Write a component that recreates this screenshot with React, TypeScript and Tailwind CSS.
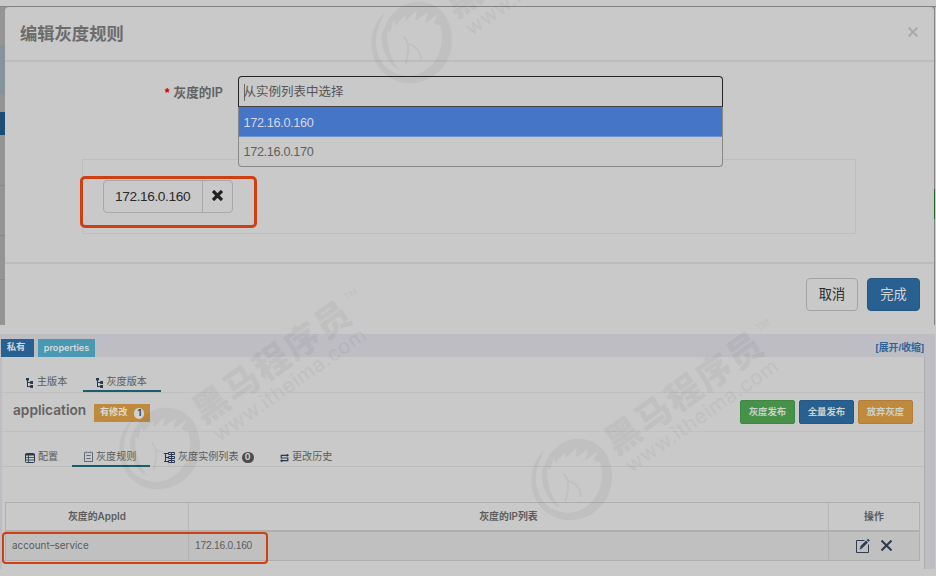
import type { ReactNode } from "react";

function Watermark({ x, y }: { x: number; y: number }) {
  return (
    <g transform={`translate(${x} ${y})`}>
      <g transform="scale(0.3333) translate(-297 -124)">
        <path d="M225 65C255 10 300 0 330 4C390 10 420 60 420 118C420 190 365 248 290 248C230 246 180 200 178 130C178 90 195 55 218 38C195 80 190 110 192 135C200 190 230 220 285 226C350 225 390 170 390 110Q390 90 385 75L365 68L378 40L340 68L348 35L310 60L314 30L280 62L280 42L250 75L245 58L234 97L226 88C222 130 240 190 265 208C235 200 205 150 210 100Z" fill="#000" />
        <path d="M275 108C292 125 292 150 280 192M290 130C310 135 325 150 327 178" fill="none" stroke="#000" strokeWidth="5" />
      </g>
      <g transform="rotate(-35)" fill="#000">
        <text x="50" y="7" fontSize="35" fontWeight="900" letterSpacing="2">黑马程序员</text>
        <text x="238" y="-13" fontSize="10">TM</text>
        <text x="53" y="30" fontSize="20.5" textLength="181" fontFamily="Inter">www.itheima.com</text>
      </g>
    </g>
  );
}

function TreeIcon() {
  return (
    <svg width="8" height="10" viewBox="0 0 8 10" className="relative top-px shrink-0" fill="#2b3a52">
      <path d="M0 0h3v2.5H2V4h2.2V3H7v3H4.2V5H2v3h2.2V7H7v3H4.2V9H1V2.5H0z" />
    </svg>
  );
}

function TableIcon() {
  return (
    <svg width="10" height="10" viewBox="0 0 10 10" className="relative top-px shrink-0" fill="none" stroke="#2b3a52">
      <rect x=".5" y=".5" width="9" height="9" rx="1" />
      <path d="M0 1.7h10" strokeWidth="1.6" />
      <path d="M3.5 2v7M1 4.5h8M1 7h8" strokeWidth=".8" />
    </svg>
  );
}

function NoteIcon() {
  return (
    <svg width="9" height="11" viewBox="0 0 9 11" className="relative shrink-0" fill="none" stroke="#46526a" strokeWidth=".8">
      <path d="M1.3 1.5H.5v9h8v-9h-.8M2.2 .3v2M6.8 .3v2M3.2 1.5h2.6M2.3 4.5h4.4M2.3 7.5h4.4" />
    </svg>
  );
}

function InstancesIcon() {
  return (
    <svg width="11" height="11" viewBox="0 0 11 11" className="relative top-px shrink-0" fill="none" stroke="#2b3a52">
      <path d="M0 1.5h4M1.5 1v9M1 5.5h3M0 9.5h4M4.5 .5h6v2h-6zM4.5 4.5h6v2h-6zM4.5 8.5h6v2h-6zM7.5 0v11" />
    </svg>
  );
}

function HistoryIcon() {
  return (
    <svg width="9" height="8" viewBox="0 0 9 8" className="relative top-px shrink-0" fill="none" stroke="#2b3a52" strokeWidth="1.2">
      <path d="M8.3 1.3H1.2V4h6.6v2.7H.7M6.8 .2l1.3 1.1-1.3 1.1M2.2 5.6L.9 6.7l1.3 1.1" />
    </svg>
  );
}

function Tab({ icon, label, className, children }: { icon: ReactNode; label: string; className: string; children?: ReactNode }) {
  return (
    <div className={`flex h-[35px] shrink-0 items-center text-[10.1px] leading-[15px] whitespace-nowrap text-[#5c5c5c] ${className}`}>
      {icon}
      <span className="ml-[3px]">{label}</span>
      {children}
    </div>
  );
}

function Modal() {
  return (
    <div className="flex h-[319px] border-t border-[#828282] bg-[#949494]">
      <div className="flex w-[5px] shrink-0 flex-col">
        <div className="h-[38px] bg-[#959595]" />
        <div className="h-[49px] bg-[#84949a]" />
        <div className="h-[18px]" />
        <div className="h-[23px] bg-[#1d4c75]" />
        <div className="h-[51px] border-b border-[#888]" />
        <div className="h-[50px] border-b border-[#888]" />
        <div className="h-[44px] border-b border-[#888]" />
      </div>
      <div className="w-[929px] shrink-0 rounded-t-[4px] bg-[#c9c9c9]">
        <div className="flex h-[55px] items-center justify-between border-b-2 border-[#bdbdbd] pr-[16px] pl-[15px]">
          <h4 className="pt-[2px] text-[17.3px] font-bold text-[#6c6c6c]">编辑灰度规则</h4>
          <svg width="10" height="10" viewBox="0 0 10 10" className="mb-[3px]" stroke="#ababab" strokeWidth="2.2"><path d="M.5 .5l9 9M9.5 .5l-9 9" /></svg>
        </div>
        <div className="h-[202px] border-b-2 border-[#bdbdbd] pt-[14px]">
          <div className="flex">
            <label className="w-[218px] pt-[7px] text-right text-[12.6px] leading-[20px] font-bold text-[#626262]">
              <span className="mr-[4px] font-bold text-[#d40000]">*</span>灰度的<span className="font-['Inter'] font-semibold">IP</span>
            </label>
            <div className="relative ml-[14.5px] h-[31px] w-[485px] rounded-t-[4px] border border-[#252525] border-b-[#444]">
              <div className="flex h-[30px] items-center pl-[5px] text-[12.5px] text-[#555]">
                <span className="-mr-px h-[17px] w-px bg-[#666]" />从实例列表中选择
              </div>
              <div className="absolute top-[30px] -left-px z-10 h-[60px] w-[485px] overflow-hidden rounded-b-[4px] border border-t-0 border-[#888] bg-[#c9c9c9] text-[12.7px] leading-[32px] tracking-[-0.35px]">
                <div className="h-[30px] border-b border-[#6f92d2] bg-[#4575c7] pl-[5px] text-[#d5d9e2]">172.16.0.160</div>
                <div className="pl-[5px] leading-[30px] text-[#606060]">172.16.0.170</div>
              </div>
            </div>
          </div>
          <div className="relative mt-[52px] ml-[77px] h-[75px] w-[774px] border border-[#bebebe] pt-[20px] pl-[20px]">
            <div className="flex h-[33px] w-[130px] rounded-[4px] border border-[#a8a8a8] text-[13.7px] tracking-[-0.4px] text-[#292929]">
              <span className="flex w-[99px] items-center border-r border-[#a8a8a8] pt-px pl-[11px]">172.16.0.160</span>
              <span className="flex flex-1 items-center justify-center">
                <svg width="11" height="11" viewBox="0 0 11 11" className="mb-[2px]" stroke="#222" strokeWidth="3.3"><path d="M1 1l9 9M10 1l-9 9" /></svg>
              </span>
            </div>
            <div className="absolute top-[16px] -left-[3px] h-[52px] w-[177px] rounded-[5px] border-3 border-[#cf3f12]" />
          </div>
        </div>
        <div className="flex justify-end gap-[9px] pt-[14px] pr-[14px] text-[13.2px]">
          <button className="h-[33px] w-[52px] rounded-[4px] border border-[#a3a3a3] text-[#292929]">取消</button>
          <button className="h-[33px] w-[53px] rounded-[4px] border border-[#245782] bg-[#286092] text-[#d5d5d5]">完成</button>
        </div>
      </div>
      <div className="h-full w-px bg-[#858585] pt-[182px]"><div className="h-[30px] bg-[#246329]" /></div>
      <div className="w-px bg-[#c9c9c9]" />
    </div>
  );
}

function Namespace() {
  return (
    <div className="mt-[9px] mr-px h-[235px] bg-[#bebdc4]">
      <div className="flex h-[23px] items-center pr-[11px] pl-[1px] pt-[4px] text-[9.3px] font-bold">
        <span className="flex h-[18px] w-[33px] items-center justify-center bg-[#286092] pr-[3px] text-[#d2d6da]">私有</span>
        <span className="ml-[4px] flex h-[18px] w-[57px] items-center justify-center bg-[#4899b1] font-['Inter'] text-[9.1px] font-semibold text-[#d5dbdd]">properties</span>
        <span className="ml-auto pt-px text-[9.8px] text-[#2c649a]">[展开/收缩]</span>
      </div>
      <div className="ml-[2px] h-[212px] w-[923px] border-r border-[#adadad] bg-[#c9c9c9]">
        <div className="flex h-[36px] border-b border-[#c0c0c0] pl-[24px]">
          <Tab className="w-[57px] pt-[14px]" icon={<TreeIcon />} label="主版本" />
          <Tab className="w-[78px] border-b-2 border-[#1b5c6f] pt-[16px] pl-[12.5px]" icon={<TreeIcon />} label="灰度版本" />
        </div>
        <div className="flex h-[39px] items-center border-b border-[#c0c0c0] pr-[11px] pl-[11px]">
          <h3 className="mb-[3px] font-['Inter'] text-[13.7px] font-semibold text-[#626262]">application</h3>
          <span className="mt-[2px] ml-[8px] flex h-[18px] w-[56px] items-center justify-center gap-[7px] bg-[#c08a3d] text-[9.2px] font-bold text-[#ded9d2]">
            有修改<i className="flex h-[11px] w-[10px] items-center justify-center rounded-full bg-[#d2d2d2] font-['Inter'] text-[9px] text-[#444] not-italic">1</i>
          </span>
          <div className="ml-auto flex gap-[4px] text-[9.4px] font-bold text-[#ccd2cc]">
            <button className="h-[24px] w-[55px] rounded-[2px] border border-[#3f8642] bg-[#469249]">灰度发布</button>
            <button className="h-[24px] w-[55px] rounded-[2px] border border-[#245782] bg-[#286092]">全量发布</button>
            <button className="h-[24px] w-[55px] rounded-[2px] border border-[#b27e35] bg-[#c08a3d]">放弃灰度</button>
          </div>
        </div>
        <div className="flex h-[35px] border-b border-[#bcbcbc] pl-[23px]">
          <Tab className="w-[47px] pt-[14px]" icon={<TableIcon />} label="配置" />
          <Tab className="w-[78px] border-b-2 border-[#1b5c6f] pt-[16px] pl-[12px]" icon={<NoteIcon />} label="灰度规则" />
          <Tab className="ml-[14px] w-[116px] pt-[14px]" icon={<InstancesIcon />} label="灰度实例列表">
            <i className="mt-[2px] ml-[3px] flex h-[11px] w-[12px] items-center justify-center rounded-full bg-[#4d4d4d] font-['Inter'] text-[8.5px] font-bold text-[#d1d1d1] not-italic">0</i>
          </Tab>
          <Tab className="pt-[14px]" icon={<HistoryIcon />} label="更改历史" />
        </div>
        <div className="relative mt-[35px] ml-[3px] w-[915px]">
          <table className="w-full table-fixed border-collapse border border-[#afafaf] text-[9.9px] text-[#5c5c5c]">
            <colgroup><col className="w-[183px]" /><col className="w-[640px]" /><col className="w-[91px]" /></colgroup>
            <thead>
              <tr className="h-[28px] border-b-2 border-[#afafaf]">
                <th className="border-r border-[#b5b5b5] p-0 pt-[2px] font-bold">灰度的<span className="font-['Inter'] font-semibold">AppId</span></th>
                <th className="border-r border-[#b5b5b5] p-0 pt-[2px] font-bold">灰度的<span className="font-['Inter'] font-semibold">IP</span>列表</th>
                <th className="p-0 pt-[2px] font-bold">操作</th>
              </tr>
            </thead>
            <tbody>
              <tr className="h-[30px] bg-[#c0c0c0]">
                <td className="border-r border-[#b2b2b2] p-0 pl-[6px] font-['Inter'] text-[9.9px]">account–service</td>
                <td className="border-r border-[#b2b2b2] p-0 pl-[6px] text-[10.2px] tracking-[-0.2px]">172.16.0.160</td>
                <td className="p-0">
                  <div className="flex items-center justify-center gap-[11px]">
                    <svg width="14" height="14" viewBox="0 0 14 14" fill="none" stroke="#303d50"><path d="M8.5 1.5h-8v12h12V5.5" /><path d="M5 8.5l6-6" strokeWidth="2.6" /><path d="M11.6 1.9l1.3-1.3" strokeWidth="2.6" /><path d="M3.5 10.5l.8-2.6 1.8 1.8z" fill="#303d50" stroke="none" /></svg>
                    <svg width="11" height="11" viewBox="0 0 11 11" stroke="#2b3a4c" strokeWidth="2"><path d="M.5 .5l10 10M10.5 .5l-10 10" /></svg>
                  </div>
                </td>
              </tr>
            </tbody>
          </table>
          <div className="absolute top-[30px] -left-[3px] h-[32px] w-[266px] rounded-[4px] border-2 border-[#cf3f12]" />
        </div>
      </div>
    </div>
  );
}

export default function App() {
  return (
    <main className="relative h-[576px] w-[936px] overflow-hidden bg-[#c9c9c9] pt-[6px] font-['Liberation_Sans','Noto_Sans_CJK_SC',sans-serif]">
      <Modal />
      <Namespace />
      <svg className="pointer-events-none absolute inset-0 z-20 opacity-[0.04]" width="936" height="576">
        <Watermark x={411} y={42} />
        <Watermark x={159} y={448} />
        <Watermark x={571} y={479} />
      </svg>
    </main>
  );
}
